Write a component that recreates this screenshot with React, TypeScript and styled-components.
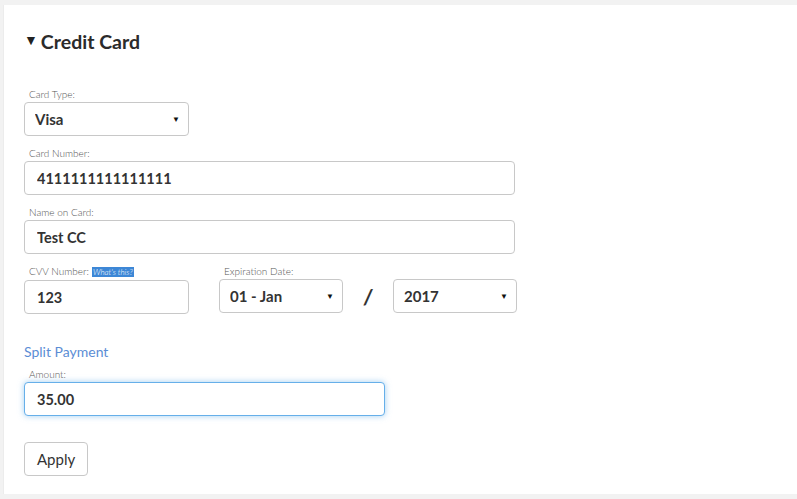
import React, { useState } from "react";
import styled, { createGlobalStyle } from "styled-components";

const GlobalStyle = createGlobalStyle`
  html, body {
    margin: 0;
    padding: 0;
    background: #f2f2f2;
    font-family: Lato, "Open Sans", Arial, sans-serif;
    color: #333;
  }
  * { box-sizing: border-box; }
`;

const Page = styled.div`
  padding: 5px 0 0 3px;
  height: 499px;
  overflow: hidden;
`;

const Panel = styled.section`
  background: #fff;
  height: 489px;
  border-left: 1px solid #ececec;
  padding: 25px 0 0 20px;
`;

const Title = styled.h2`
  margin: 0 0 34px;
  display: flex;
  align-items: center;
  gap: 3px;
  font-size: 19.5px;
  line-height: 24px;
  font-weight: 700;
  color: #2b2b2b;
`;

const Caret = styled.span`
  font-size: 14px;
  line-height: 14px;
  margin-top: -5px;
  color: #222;
`;

const Group = styled.div<{ $width?: number }>`
  width: ${(p) => (p.$width ? `${p.$width}px` : "auto")};
  margin-bottom: 11px;
`;

const Label = styled.label`
  display: block;
  padding-left: 5px;
  margin-bottom: 2px;
  font-size: 10px;
  line-height: 12px;
  font-weight: 300;
  color: #555;
`;

const HelpLink = styled.a`
  margin-left: 3px;
  padding: 0 1px;
  font-size: 8px;
  font-style: italic;
  color: #fff;
  background: #3d87d6;
  text-decoration: none;
`;

const TextInput = styled.input<{ $width: number; $focused?: boolean }>`
  display: block;
  width: ${(p) => p.$width}px;
  height: 34px;
  padding: 0 12px;
  border: 1px solid ${(p) => (p.$focused ? "#66afe9" : "#c8c8c8")};
  border-radius: 4px;
  box-shadow: ${(p) =>
    p.$focused ? "0 0 6px rgba(102, 175, 233, 0.6)" : "none"};
  font-family: inherit;
  font-size: 14.5px;
  font-weight: 700;
  color: #333;
  outline: none;
  background: #fff;
`;

const SelectBox = styled.div<{ $width: number }>`
  display: flex;
  align-items: center;
  width: ${(p) => p.$width}px;
  height: 34px;
  border: 1px solid #c8c8c8;
  border-radius: 4px;
  background: #fff;
`;

const Select = styled.select`
  flex: 1;
  min-width: 0;
  height: 100%;
  padding: 0 0 0 10px;
  border: none;
  appearance: none;
  background: transparent;
  font-family: inherit;
  font-size: 15px;
  font-weight: 700;
  color: #333;
  outline: none;
`;

const Arrow = styled.span`
  width: 16px;
  font-size: 8px;
  color: #111;
`;

const Row = styled.div`
  display: flex;
  align-items: flex-start;
`;

const ExpiryGroup = styled.div`
  margin-left: 30px;
`;

const ExpiryControls = styled.div`
  display: flex;
  align-items: center;
`;

const Slash = styled.span`
  width: 50px;
  text-align: center;
  font-size: 20px;
  font-weight: 900;
  font-style: italic;
  color: #333;
`;

const SectionTitle = styled.h3`
  margin: 18px 0 8px;
  font-size: 14px;
  line-height: 17px;
  font-weight: 400;
  color: #5b8dd5;
`;

const Button = styled.button`
  margin-top: 15px;
  height: 34px;
  padding: 0 12px;
  border: 1px solid #c8c8c8;
  border-radius: 4px;
  background: #fff;
  font-family: inherit;
  font-size: 15px;
  color: #333;
`;

const App = () => {
  const [amount, setAmount] = useState("35.00");

  return (
    <Page>
      <GlobalStyle />
      <Panel>
        <Title>
          <Caret>▼</Caret>Credit Card
        </Title>

        <Group>
          <Label>Card Type:</Label>
          <SelectBox $width={165}>
            <Select defaultValue="visa">
              <option value="visa">Visa</option>
              <option value="mc">MasterCard</option>
            </Select>
            <Arrow>▼</Arrow>
          </SelectBox>
        </Group>

        <Group>
          <Label>Card Number:</Label>
          <TextInput $width={491} defaultValue="4111111111111111" />
        </Group>

        <Group>
          <Label>Name on Card:</Label>
          <TextInput $width={491} defaultValue="Test CC" />
        </Group>

        <Row>
          <Group $width={165}>
            <Label>
              CVV Number:<HelpLink href="#">What's this?</HelpLink>
            </Label>
            <TextInput $width={165} defaultValue="123" />
          </Group>
          <ExpiryGroup>
            <Label>Expiration Date:</Label>
            <ExpiryControls>
              <SelectBox $width={124}>
                <Select defaultValue="01">
                  <option value="01">01 - Jan</option>
                  <option value="02">02 - Feb</option>
                </Select>
                <Arrow>▼</Arrow>
              </SelectBox>
              <Slash>/</Slash>
              <SelectBox $width={124}>
                <Select defaultValue="2017">
                  <option value="2017">2017</option>
                  <option value="2018">2018</option>
                </Select>
                <Arrow>▼</Arrow>
              </SelectBox>
            </ExpiryControls>
          </ExpiryGroup>
        </Row>

        <SectionTitle>Split Payment</SectionTitle>
        <Group>
          <Label>Amount:</Label>
          <TextInput
            $width={361}
            $focused
            autoFocus
            value={amount}
            onChange={(e) => setAmount(e.target.value)}
          />
        </Group>

        <Button>Apply</Button>
      </Panel>
    </Page>
  );
};

export default App;
